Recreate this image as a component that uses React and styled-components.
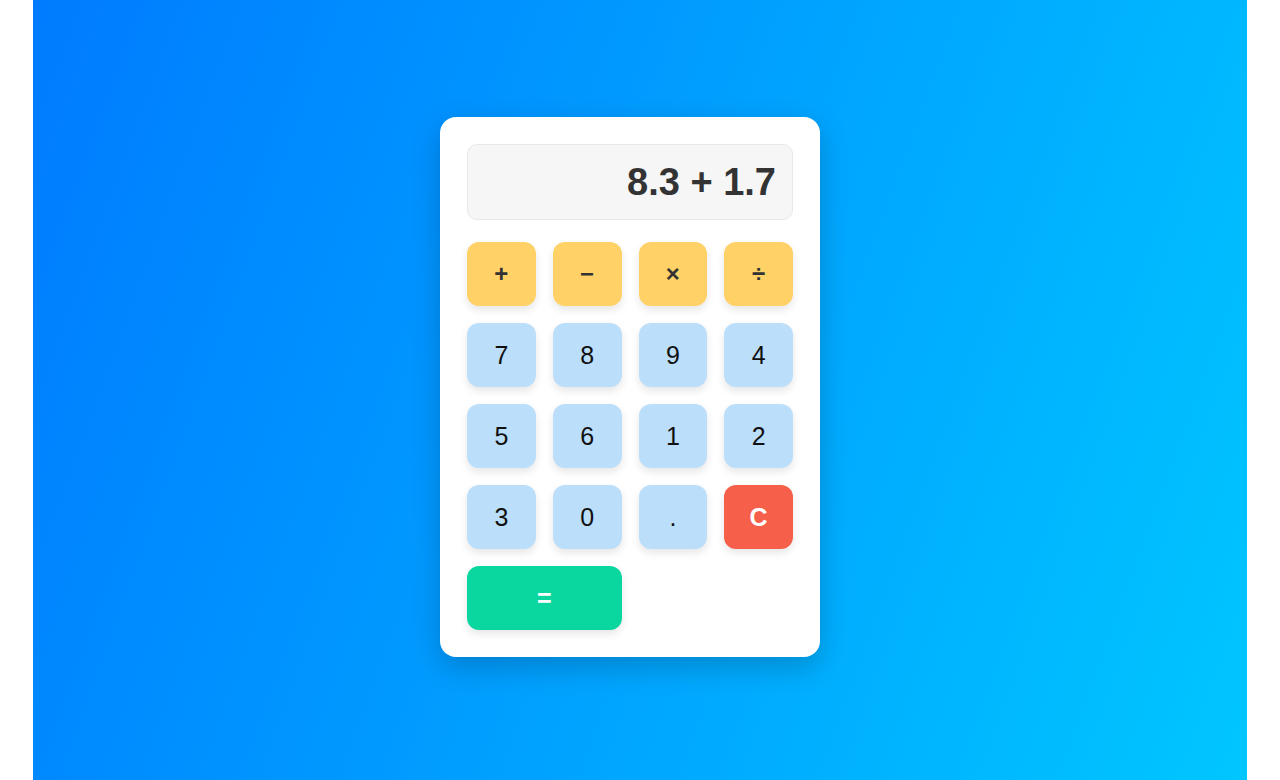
import styled, { createGlobalStyle } from 'styled-components'

const GlobalStyle = createGlobalStyle`
  html, body {
    margin: 0;
    padding: 0;
    background: #ffffff;
  }
  body {
    font-family: 'Liberation Sans', Arial, sans-serif;
  }
`

const Page = styled.div`
  margin: 0 33px;
  height: 780px;
  background: linear-gradient(110deg, #007bff, #00c6ff);
  display: flex;
  align-items: center;
  justify-content: center;
  padding: 0 20px 6px 0;
  box-sizing: border-box;
`

const Card = styled.div`
  width: 380px;
  box-sizing: border-box;
  padding: 27px;
  background: #ffffff;
  border-radius: 16px;
  box-shadow: 0 10px 30px rgba(0, 0, 0, 0.2);
`

const Display = styled.div`
  height: 76px;
  box-sizing: border-box;
  background: #f6f6f6;
  border: 1px solid #e8e8e8;
  border-radius: 10px;
  display: flex;
  align-items: center;
  justify-content: flex-end;
  padding: 0 16px;
  margin-bottom: 22px;
  font-size: 38px;
  font-weight: 700;
  color: #333333;
`

const Keys = styled.div`
  display: grid;
  grid-template-columns: repeat(4, 1fr);
  grid-auto-rows: 64px;
  gap: 17px;
`

const kinds = {
  op: { bg: '#ffd166', color: '#333333', weight: 700, size: '24px' },
  num: { bg: '#bbdefb', color: '#111111', weight: 400, size: '25px' },
  clear: { bg: '#f65f4a', color: '#ffffff', weight: 700, size: '25px' },
  equals: { bg: '#0ad6a0', color: '#ffffff', weight: 700, size: '25px' },
}

const Key = styled.button`
  border: none;
  border-radius: 12px;
  background: ${(p) => kinds[p.$kind].bg};
  color: ${(p) => kinds[p.$kind].color};
  font-family: 'Liberation Sans', Arial, sans-serif;
  font-size: ${(p) => kinds[p.$kind].size};
  font-weight: ${(p) => kinds[p.$kind].weight};
  box-shadow: 0 4px 8px rgba(0, 0, 0, 0.1);
  cursor: pointer;
  grid-column: ${(p) => (p.$wide ? 'span 2' : 'auto')};
  display: flex;
  align-items: center;
  justify-content: center;
  padding: 0;
`

const keys = [
  ['+', 'op'], ['−', 'op'], ['×', 'op'], ['÷', 'op'],
  ['7', 'num'], ['8', 'num'], ['9', 'num'], ['4', 'num'],
  ['5', 'num'], ['6', 'num'], ['1', 'num'], ['2', 'num'],
  ['3', 'num'], ['0', 'num'], ['.', 'num'], ['C', 'clear'],
]

const App = () => {
  return (
    <>
      <GlobalStyle />
      <Page>
        <Card>
          <Display>8.3 + 1.7</Display>
          <Keys>
            {keys.map(([label, kind]) => (
              <Key key={label} $kind={kind}>
                {label}
              </Key>
            ))}
            <Key $kind='equals' $wide>
              =
            </Key>
          </Keys>
        </Card>
      </Page>
    </>
  )
}

export default App
